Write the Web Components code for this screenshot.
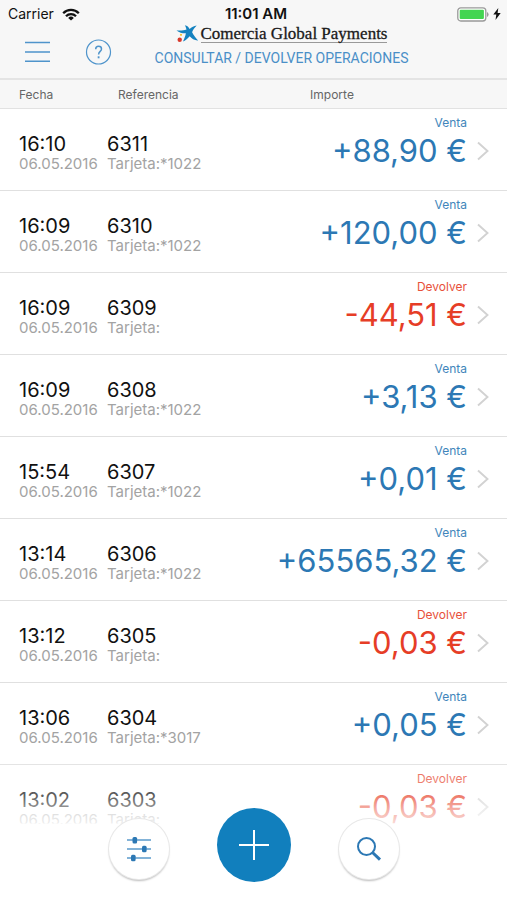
<!DOCTYPE html>
<html lang="es">
<head>
<meta charset="utf-8">
<meta name="viewport" content="width=device-width, initial-scale=1">
<title>Consultar / Devolver operaciones</title>
<style>
  html, body { height: 100%; }
  body { margin: 0; background: #fff; color: #111; font-family: Inter, "Liberation Sans", sans-serif; }
</style>
</head>
<body>
<payments-app></payments-app>
<script>
class BaseElement extends HTMLElement {
  constructor() {
    super();
    this.attachShadow({ mode: "open" });
  }
  connectedCallback() {
    this.shadowRoot.innerHTML = this.render();
  }
}

customElements.define("status-bar", class extends BaseElement {
  render() {
    return `
    <style>
      :host { display: grid; grid-template-columns: 1fr auto 1fr; align-items: center; height: 25px; padding: 3px 6px 0 8px; box-sizing: border-box; font-size: 14px; line-height: 20px; color: #111; }
      .carrier, .power { display: flex; align-items: center; gap: 8px; }
      .power { justify-content: flex-end; gap: 4px; }
      time { padding-left: 3px; font-weight: 600; font-size: 15px; }
      svg { display: block; }
    </style>
    <span class="carrier"><span>Carrier</span>
      <svg width="18" height="13" viewBox="0 0 18 13" aria-hidden="true">
        <g fill="none" stroke="#111" stroke-width="2.3"><path d="M1.2 5.2a11 11 0 0 1 15.6 0"/><path d="M4 8.3a7 7 0 0 1 10 0"/></g>
        <path d="M9 12.6 6.2 9.9a4 4 0 0 1 5.6 0z" fill="#111"/>
      </svg>
    </span>
    <time>11:01 AM</time>
    <span class="power">
      <svg width="32" height="15" viewBox="0 0 32 15" role="img" aria-label="Batería">
        <rect x=".8" y=".8" width="28" height="13.2" rx="3" fill="#fff" stroke="#999" stroke-width="1.3"/>
        <rect x="2.7" y="2.7" width="24.2" height="9.4" rx="1" fill="#43d551"/>
        <path d="M30 5v5q1.6-.8 1.6-2.500t-1.600-2.500z" fill="#999"/>
      </svg>
      <svg width="8" height="12" viewBox="0 0 8 12" aria-hidden="true"><path d="M5.300 0 .3 6.600h3L2.500 12l5.200-7H4.600z" fill="#111"/></svg>
    </span>`;
  }
});

customElements.define("brand-logo", class extends BaseElement {
  render() {
    return `
    <style>
      :host { display: flex; align-items: flex-start; gap: 2px; }
      svg { display: block; }
      span { font: 17px/17px "Liberation Serif", serif; color: #1a1a1a; -webkit-text-stroke: .3px #1a1a1a; border-bottom: 1px solid #999; white-space: nowrap; }
    </style>
    <svg width="23" height="18" viewBox="0 0 23 18" aria-hidden="true">
      <path d="M10.500 4.500C10 2.500 9.500 1 8.800.2c2.500.4 3.900 1.700 4.800 3.800C15.500 2.500 18 .8 20.700.5 19 2.200 17 4.500 16.100 7.200c1.600 3 3.500 5.700 6 8.300-3.300.3-6.500-2-8.400-4.200-2.300 2.500-4.300 4.500-6.800 5.200 1.200-2.500 2.500-5.200 3-8.300C7 8.400 3.500 7.700.5 5.400c3.300.4 7 .3 10-.9z" fill="#1482c0"/>
      <circle cx="3.700" cy="14.800" r="2.200" fill="#d8392c"/><circle cx="5" cy="9.800" r="1.100" fill="#f2c230"/>
    </svg>
    <span>Comercia Global Payments</span>`;
  }
});

customElements.define("nav-bar", class extends BaseElement {
  render() {
    return `
    <style>
      :host { display: flex; align-items: flex-start; height: 55px; box-sizing: border-box; padding: 0 56px 0 24px; border-bottom: 2px solid #e4e4e4; }
      button { display: block; margin: 13px 0 0; padding: 0; border: 0; background: none; cursor: pointer; }
      svg { display: block; }
      .help { margin-left: 34px; }
      .title { flex: 1; display: flex; flex-direction: column; align-items: center; }
      h1 { margin: 5px 0 0; font-family: Roboto, sans-serif; font-size: 14px; line-height: 20px; font-weight: 400; color: #4a8fc7; white-space: nowrap; }
    </style>
    <button aria-label="Menú"><svg width="27" height="28" viewBox="0 0 27 28"><path d="M1 4.500h25M1 14h25M1 23.200h25" stroke="#4f94cb" stroke-width="1.500"/></svg></button>
    <button class="help" aria-label="Ayuda"><svg width="27" height="28" viewBox="0 0 27 28" fill="none" stroke="#4f94cb"><circle cx="13.500" cy="14" r="12" stroke-width="1.200"/><path d="M10.700 11.200c0-2 1.200-3 2.900-3s2.900 1 2.900 2.700c0 2.500-2.900 2.500-2.900 5.600" stroke-width="1.500"/><path d="M13.600 18.300v2" stroke-width="1.800"/></svg></button>
    <div class="title"><brand-logo></brand-logo><h1>CONSULTAR / DEVOLVER OPERACIONES</h1></div>`;
  }
});

const operations = [
  ["16:10", "6311", "*1022", "+88,90 €"],
  ["16:09", "6310", "*1022", "+120,00 €"],
  ["16:09", "6309", "", "-44,51 €"],
  ["16:09", "6308", "*1022", "+3,13 €"],
  ["15:54", "6307", "*1022", "+0,01 €"],
  ["13:14", "6306", "*1022", "+65565,32 €"],
  ["13:12", "6305", "", "-0,03 €"],
  ["13:06", "6304", "*3017", "+0,05 €"],
  ["13:02", "6303", "", "-0,03 €"]
];

customElements.define("operations-table", class extends BaseElement {
  render() {
    const rows = operations.map(([time, ref, card, amount]) => {
      const refund = amount.startsWith("-");
      return `<tr>
        <td><div class="main">${time}</div><div class="sub">06.05.2016</div></td>
        <td><div class="main">${ref}</div><div class="sub">Tarjeta:${card}</div></td>
        <td class="amount ${refund ? "refund" : ""}"><div class="kind">${refund ? "Devolver" : "Venta"}</div><div class="value">${amount}</div></td>
        <td class="go"><a href="#${ref}" aria-label="Ver operación ${ref}"><svg width="12" height="20" viewBox="0 0 12 20"><path d="m1 1.500 9.500 8.500L1 18.500" fill="none" stroke="#d2d2d2" stroke-width="1.900"/></svg></a></td>
      </tr>`;
    }).join("");
    return `
    <style>
      :host { display: block; }
      table { width: 100%; table-layout: fixed; border-collapse: separate; border-spacing: 0; }
      .date { width: 107px; } .ref { width: 146px; } .next { width: 40px; }
      th { height: 29px; box-sizing: border-box; padding: 2px 0 0 19px; background: #f7f7f7; border-bottom: 1px solid #e2e2e2; font-size: 12px; line-height: 16px; font-weight: 400; color: #666; text-align: left; }
      th:nth-child(2) { padding-left: 11px; }
      th:nth-child(3) { padding: 2px 56px 0 0; text-align: center; }
      td { height: 82px; box-sizing: border-box; padding: 25px 0 0; border-bottom: 1px solid #e0e0e0; vertical-align: top; white-space: nowrap; }
      td:first-child { padding-left: 19px; }
      .main { font-size: 20px; line-height: 21px; color: #111; }
      .sub { font-size: 15px; line-height: 18px; color: #a3a3a3; }
      td.amount { padding-top: 6px; text-align: right; color: #2c78b4; }
      td.refund { color: #e63d26; }
      .kind { font-size: 12px; line-height: 16px; opacity: .9; }
      .value { font-size: 31px; line-height: 39px; font-weight: 400; }
      td.go { padding: 32px 0 0 10px; }
      a, svg { display: block; } a { width: 12px; }
    </style>
    <table>
      <colgroup><col class="date"><col class="ref"><col><col class="next"></colgroup>
      <thead><tr><th>Fecha</th><th>Referencia</th><th>Importe</th><th aria-label="Detalle"></th></tr></thead>
      <tbody>${rows}</tbody>
    </table>`;
  }
});

customElements.define("round-button", class extends BaseElement {
  render() {
    return `
    <style>
      :host { display: block; }
      button { display: grid; place-items: center; width: 60px; height: 60px; padding: 0; border: 0; border-radius: 50%; background: #fff; box-shadow: 0 0 0 1px #e8e8e8, 0 2px 2px #bbb; cursor: pointer; }
      :host([primary]) button { width: 74px; height: 74px; background: #117fbd; box-shadow: none; }
    </style>
    <button aria-label="${this.getAttribute("label")}"><slot></slot></button>`;
  }
});

customElements.define("action-bar", class extends BaseElement {
  render() {
    return `
    <style>
      :host { display: flex; justify-content: center; align-items: flex-end; gap: 48px; box-sizing: border-box; height: 150px; padding-bottom: 18px;
        background: linear-gradient(to bottom, rgba(255,255,255,0) 0, rgba(255,255,255,.26) 28px, rgba(255,255,255,.32) 46px, rgba(255,255,255,.6) 60px, rgba(255,255,255,.8) 73px, #fff 74px); }
      round-button:not([primary]) { margin-bottom: 3px; }
      svg { display: block; }
    </style>
    <round-button label="Filtrar"><svg width="26" height="26" viewBox="0 0 26 26" fill="#2c78b4"><path d="M1 4h24M1 13h24M1 22h24" stroke="#5b9bcc" stroke-width="1.600"/><rect x="6.500" y="1" width="4.600" height="6.500" rx="1.500"/><rect x="16" y="9.800" width="4.600" height="6.500" rx="1.500"/><rect x="5" y="18.800" width="4.600" height="6.500" rx="1.500"/></svg></round-button>
    <round-button primary label="Nueva operación"><svg width="32" height="32" viewBox="0 0 32 32"><path d="M16 1v30M1 16h30" stroke="#fff" stroke-width="2"/></svg></round-button>
    <round-button label="Buscar"><svg width="26" height="26" viewBox="0 0 26 26" fill="none" stroke="#2c78b4"><circle cx="10.500" cy="10.500" r="8.500" stroke-width="2"/><path d="m16.500 16.500 7.500 7.200" stroke-width="3"/></svg></round-button>`;
  }
});

customElements.define("payments-app", class extends BaseElement {
  render() {
    return `
    <style>
      :host { display: flex; flex-direction: column; height: 100%; position: relative; overflow: hidden; }
      header { background: #f7f7f7; }
      main { flex: 1; min-height: 0; overflow: hidden; }
      action-bar { position: absolute; left: 0; right: 0; bottom: 0; }
    </style>
    <header><status-bar></status-bar><nav-bar></nav-bar></header>
    <main><operations-table></operations-table></main>
    <action-bar></action-bar>`;
  }
});
</script>
</body>
</html>
